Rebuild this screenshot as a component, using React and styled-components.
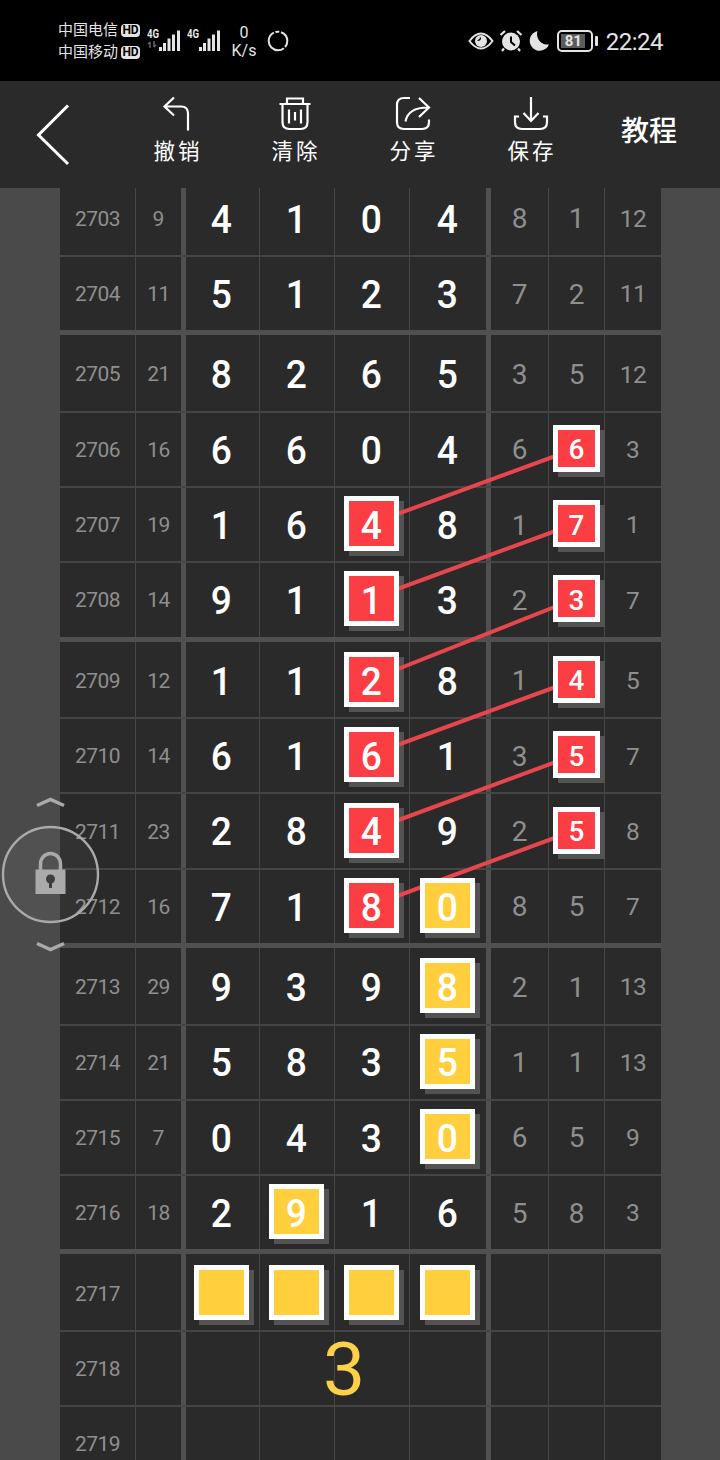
import styled, { createGlobalStyle } from "styled-components"

const GlobalStyle = createGlobalStyle`
	* {
		box-sizing: border-box;
	}
	body {
		margin: 0;
		background: #4a4a4a;
		font-family: Roboto, "Noto Sans CJK SC", sans-serif;
	}
`

// "r" = red mark, "y" = yellow mark in front of the digit
const groups = [
	[
		["2703", "9", "4", "1", "0", "4", "8", "1", "12"],
		["2704", "11", "5", "1", "2", "3", "7", "2", "11"],
	],
	[
		["2705", "21", "8", "2", "6", "5", "3", "5", "12"],
		["2706", "16", "6", "6", "0", "4", "6", "r6", "3"],
		["2707", "19", "1", "6", "r4", "8", "1", "r7", "1"],
		["2708", "14", "9", "1", "r1", "3", "2", "r3", "7"],
	],
	[
		["2709", "12", "1", "1", "r2", "8", "1", "r4", "5"],
		["2710", "14", "6", "1", "r6", "1", "3", "r5", "7"],
		["2711", "23", "2", "8", "r4", "9", "2", "r5", "8"],
		["2712", "16", "7", "1", "r8", "y0", "8", "5", "7"],
	],
	[
		["2713", "29", "9", "3", "9", "y8", "2", "1", "13"],
		["2714", "21", "5", "8", "3", "y5", "1", "1", "13"],
		["2715", "7", "0", "4", "3", "y0", "6", "5", "9"],
		["2716", "18", "2", "y9", "1", "6", "5", "8", "3"],
	],
	[
		["2717", "", "y", "y", "y", "y", "", "", ""],
		["2718", "", "", "", "", "", "", "", ""],
		["2719", "", "", "", "", "", "", "", ""],
	],
]

// each link joins a mark in the third column with one in the eighth
const links = [
	[523.5, 448.5],
	[598.5, 523.5],
	[679.5, 598.5],
	[754.5, 679.5],
	[830, 754.5],
	[905.5, 830],
]

const Screen = styled.div`
	position: relative;
	width: 720px;
	height: 1460px;
	overflow: hidden;
	background: #4a4a4a;
`
const StatusBar = styled.div`
	display: flex;
	justify-content: space-between;
	height: 81px;
	padding: 19px 57px 0 58px;
	background: #000;
	color: #e4e4e4;
`
const StatusSide = styled.div`
	display: flex;
	height: 44px;
	align-items: center;
`
const Carriers = styled.div`
	display: flex;
	flex-direction: column;
	width: 84px;
`
const Carrier = styled.div`
	display: flex;
	align-items: center;
	gap: 3px;
	height: 22px;
	font-size: 15px;
	line-height: 22px;
	white-space: nowrap;
`
const HdBadge = styled.span`
	width: 19px;
	height: 13px;
	border-radius: 4px;
	background: #e4e4e4;
	color: #000;
	font-size: 12px;
	font-weight: 700;
	line-height: 13.5px;
	text-align: center;
`
const Signal = styled.div`
	position: relative;
	width: 40px;
	height: 30px;
	margin-left: ${({ $gap }) => $gap}px;
`
const SignalLabel = styled.span`
	position: absolute;
	left: 0;
	top: 2px;
	font-size: 12px;
	font-weight: 700;
	line-height: 12px;
	transform: scaleX(0.8);
	transform-origin: left;
`
const Speed = styled.div`
	width: 30px;
	margin: 2px 0 0 2px;
	font-size: 16px;
	line-height: 18px;
	text-align: center;
`
const Spinner = styled.svg`
	margin-left: 7px;
`
const StatusIcon = styled.svg`
	margin-left: ${({ $gap }) => $gap}px;
`
const Battery = styled.div`
	display: flex;
	align-items: center;
	justify-content: center;
	position: relative;
	width: 36px;
	height: 22px;
	margin: 0 13px 0 7px;
	border: 2px solid #e4e4e4;
	border-radius: 5px;
	background: linear-gradient(#5c5c5c, #5c5c5c) 2px 2px / 24px 14px no-repeat;
	font-size: 15px;
	font-weight: 700;
	line-height: 18px;
	padding-right: 3px;

	&::after {
		content: "";
		position: absolute;
		right: -7px;
		top: 4px;
		width: 3px;
		height: 10px;
		border-radius: 1px;
		background: #e4e4e4;
	}
`
const Clock = styled.span`
	padding-top: 1px;
	font-size: 24px;
	line-height: 28px;
	letter-spacing: -0.5px;
`
const Toolbar = styled.header`
	display: flex;
	height: 107px;
	background: #2a2a2a;
	color: #fff;
`
const Back = styled.div`
	width: 118px;
	padding: 23px 0 0 35px;
`
const Tool = styled.div`
	display: flex;
	flex-direction: column;
	align-items: center;
	width: 118px;
	padding-top: 15px;
	font-size: 21.5px;
	line-height: 30px;
`
const ToolLabel = styled.span`
	margin-top: 3px;
	letter-spacing: 3px;
	padding-left: 2px;
`
const Tutorial = styled.div`
	width: 118px;
	padding-top: 31px;
	font-size: 28px;
	font-weight: 500;
	line-height: 40px;
	text-align: center;
`
const Chart = styled.main`
	height: 1272px;
	overflow: hidden;
	padding-left: 60px;
`
const Sheet = styled.div`
	width: 601px;
	margin-top: -6.3px;
	background: #2a2a2a;
`
const Group = styled.div`
	border-bottom: 5px solid #505050;
`
const Row = styled.div`
	display: grid;
	grid-template-columns: 76px 50px 74px 75px 75px 81px 58px 56px 56px;
	height: ${({ $place }) => ($place === "first" ? 77.6 : $place === "last" ? 73.2 : 75.3)}px;
	border-bottom: ${({ $place }) => ($place === "last" ? "none" : "2px solid #454545")};
`
const Cell = styled.div`
	display: flex;
	position: relative;
	align-items: center;
	justify-content: center;
	padding: 0 ${({ $big }) => ($big ? 2 : 0)}px ${({ $top }) => ($top ? 0 : 2)}px 0;
	border-right: ${({ $edge }) => ($edge === "thick" ? "5px solid #505050" : $edge === "none" ? "none" : "1px solid #464646")};
	color: ${({ $big }) => ($big ? "#fff" : "#8f8f8f")};
	font-size: ${({ $size }) => $size}px;
	font-weight: ${({ $big }) => ($big ? 500 : 400)};
	line-height: 1;
`
const Digits = styled.span`
	position: relative;
	padding-top: 4px;
	letter-spacing: ${({ $tight }) => ($tight ? "-0.5px" : "0")};
	transform: scaleX(${({ $narrow }) => ($narrow ? 0.94 : 1)});
`
const Mark = styled.div`
	position: relative;
	width: ${({ $small }) => ($small ? 47 : 55)}px;
	height: ${({ $small }) => ($small ? 47 : 55)}px;
`
const MarkShadow = styled.div`
	position: absolute;
	inset: 5px -5px -5px 5px;
	z-index: 1;
	background: #535353;
`
const MarkFace = styled.div`
	display: flex;
	position: relative;
	z-index: 3;
	height: 100%;
	align-items: center;
	justify-content: center;
	border: 5px solid #fff;
	background: ${({ $tone }) => ($tone === "r" ? "#fb3d44" : "#ffcf3d")};
	color: #fff;
	font-weight: 500;
`
const Links = styled.svg`
	position: absolute;
	left: 0;
	top: 0;
	z-index: 2;
	pointer-events: none;
`
const Guess = styled.div`
	position: absolute;
	left: 304px;
	top: 1325px;
	z-index: 3;
	width: 80px;
	color: #fdd049;
	font-size: 75px;
	line-height: 88px;
	text-align: center;
`
const LockToggle = styled.div`
	position: absolute;
	left: 0;
	top: 790px;
	z-index: 4;
`

const sizes = [21, 21, 39.5, 39.5, 39.5, 39.5, 28, 28, 28]

const edgeOf = (col) => {
	if (col === 1 || col === 5) return "thick"
	return col === 8 ? "none" : "thin"
}

function NumberCell({ value, col, top }) {
	const big = col > 1 && col < 6
	const tone = /^[ry]/.test(value) ? value[0] : null
	const text = tone ? value.slice(1) : value
	// the last column is set smaller than its neighbours
	const size = col === 8 ? 24.5 : sizes[col]
	return (
		<Cell $big={big} $top={top} $size={size} $edge={edgeOf(col)}>
			{tone ? (
				<Mark $small={!big}>
					<MarkShadow />
					<MarkFace $tone={tone}>
						<Digits $narrow={big}>{text}</Digits>
					</MarkFace>
				</Mark>
			) : (
				<Digits $narrow={big} $tight={text.length > 1}>{text}</Digits>
			)}
		</Cell>
	)
}

function SignalBars({ gap, arrows }) {
	return (
		<Signal $gap={gap}>
			<SignalLabel>4G</SignalLabel>
			<svg width="36" height="30" viewBox="0 0 36 30" fill="#e4e4e4">
				{arrows && <path d="M3 16v6M1 18l2-2M7 15v6M9 19l-2 2" stroke="#666" strokeWidth="1.5" fill="none" />}
				<rect x="12" y="21" width="3" height="4" />
				<rect x="16" y="17" width="3" height="8" />
				<rect x="20.500" y="12.500" width="3" height="12.500" />
				<rect x="25" y="8.500" width="3" height="16.500" />
				<rect x="30" y="4.500" width="3" height="20.500" />
			</svg>
		</Signal>
	)
}

const tools = [
	{
		label: "撤销",
		icon: <path d="M15 1.500L5.500 10.500L15 19.500M5.500 10.500H22Q29 10.500 29 17.500V34.500" />,
	},
	{
		label: "清除",
		icon: <path d="M2.500 8H33.500M10 8V2.500H26V8M5.500 8V26Q5.500 33 12.500 33H23.500Q30.500 33 30.500 26V8M12 13.500V27.500M18 16V24.500M24 13.500V27.500" />,
	},
	{
		label: "分享",
		icon: <path d="M15 2H9Q2 2 2 9V26Q2 33 9 33H27Q34 33 34 26V23.500M10.500 25.500Q13 11.500 33 11.500M24 2L34 11.500L24 21" />,
	},
	{
		label: "保存",
		icon: <path d="M18 1V24.500M10.500 17L18 25L25.500 17M6 20.500H2V26Q2 33 9 33H27Q34 33 34 26V20.500H30" />,
	},
]

export default function App() {
	return (
		<>
			<GlobalStyle />
			<Screen>
				<StatusBar>
					<StatusSide>
						<Carriers>
							<Carrier>中国电信<HdBadge>HD</HdBadge></Carrier>
							<Carrier>中国移动<HdBadge>HD</HdBadge></Carrier>
						</Carriers>
						<SignalBars gap={5} arrows />
						<SignalBars gap={0} />
						<Speed>0<br />K/s</Speed>
						<Spinner width="24" height="24" viewBox="0 0 24 24" fill="none" stroke="#e4e4e4" strokeWidth="2">
							<circle cx="12" cy="12" r="9.300" strokeDasharray="6.5 1.7 31 1.7 4 1.7 11.8 0" />
						</Spinner>
					</StatusSide>
					<StatusSide>
						<StatusIcon $gap={0} width="26" height="22" viewBox="0 0 26 22">
							<path d="M1.500 11Q7 3.500 13 3.500T24.500 11Q19 18.500 13 18.500T1.500 11Z" fill="none" stroke="#e4e4e4" strokeWidth="2" />
							<circle cx="13" cy="11" r="6" fill="#e4e4e4" />
							<path d="M12.500 7.500Q12.500 10.500 9.500 10.500A3.200 3.200 0 0 0 12.500 7.500Z" fill="#000" stroke="#000" strokeWidth="1.200" />
						</StatusIcon>
						<StatusIcon $gap={5} width="24" height="24" viewBox="0 0 24 24">
							<circle cx="12" cy="12.500" r="9" fill="#e4e4e4" />
							<path d="M1.500 6L6 2M22.500 6L18 2M5 19.500L3 22M19 19.500L21 22" stroke="#e4e4e4" strokeWidth="2.200" />
							<path d="M12 7.500V13L16 16.500" fill="none" stroke="#000" strokeWidth="2" />
						</StatusIcon>
						<StatusIcon $gap={5} width="22" height="22" viewBox="0 0 22 22">
							<path d="M9.500 1A10 10 0 1 0 21 14.500A10.500 10.500 0 0 1 9.500 1Z" fill="#e4e4e4" />
						</StatusIcon>
						<Battery>81</Battery>
						<Clock>22:24</Clock>
					</StatusSide>
				</StatusBar>

				<Toolbar>
					<Back>
						<svg width="36" height="62" viewBox="0 0 36 62" fill="none" stroke="#fff" strokeWidth="3">
							<path d="M33 1.500L3.500 31L33 60" />
						</svg>
					</Back>
					{tools.map((tool) => (
						<Tool key={tool.label}>
							<svg width="36" height="38" viewBox="0 0 36 38" fill="none" stroke="#fff" strokeWidth="2.200">
								{tool.icon}
							</svg>
							<ToolLabel>{tool.label}</ToolLabel>
						</Tool>
					))}
					<Tutorial>教程</Tutorial>
				</Toolbar>

				<Chart>
					<Sheet>
						{groups.map((rows, g) => (
							<Group key={g}>
								{rows.map((row, r) => {
									const index = g === 0 ? r + 2 : r
									const place = index === 0 ? "first" : index === 3 ? "last" : "middle"
									return (
										<Row key={row[0]} $place={place}>
											{row.map((value, col) => (
												<NumberCell key={col} value={value} col={col} top={place === "first"} />
											))}
										</Row>
									)
								})}
							</Group>
						))}
					</Sheet>
				</Chart>

				<Links width="720" height="1460" viewBox="0 0 720 1460" stroke="#e8464d" strokeWidth="4">
					{links.map(([from, to]) => (
						<line key={from} x1="371.500" y1={from} x2="576" y2={to} />
					))}
				</Links>
				<Guess>3</Guess>

				<LockToggle>
					<svg width="102" height="170" viewBox="0 0 102 170" fill="none" stroke="#aaa">
						<path d="M37 15.500L50.500 9.500L64 15.500M37 153.500L50.500 159.500L64 153.500" strokeWidth="3.500" />
						<circle cx="50.500" cy="84.500" r="47.500" strokeWidth="2.400" fill="#fff" fillOpacity="0.04" />
						<path d="M40.500 80V74A10 10.500 0 0 1 60.500 74V80" strokeWidth="3.500" />
						<path d="M35.500 79.500H65.500V104H35.500Z" fill="#aaa" stroke="none" />
						<circle cx="50.500" cy="89" r="4.500" fill="#3e3e3e" stroke="none" />
						<path d="M50.500 89V98" stroke="#3e3e3e" strokeWidth="3" />
					</svg>
				</LockToggle>
			</Screen>
		</>
	)
}
